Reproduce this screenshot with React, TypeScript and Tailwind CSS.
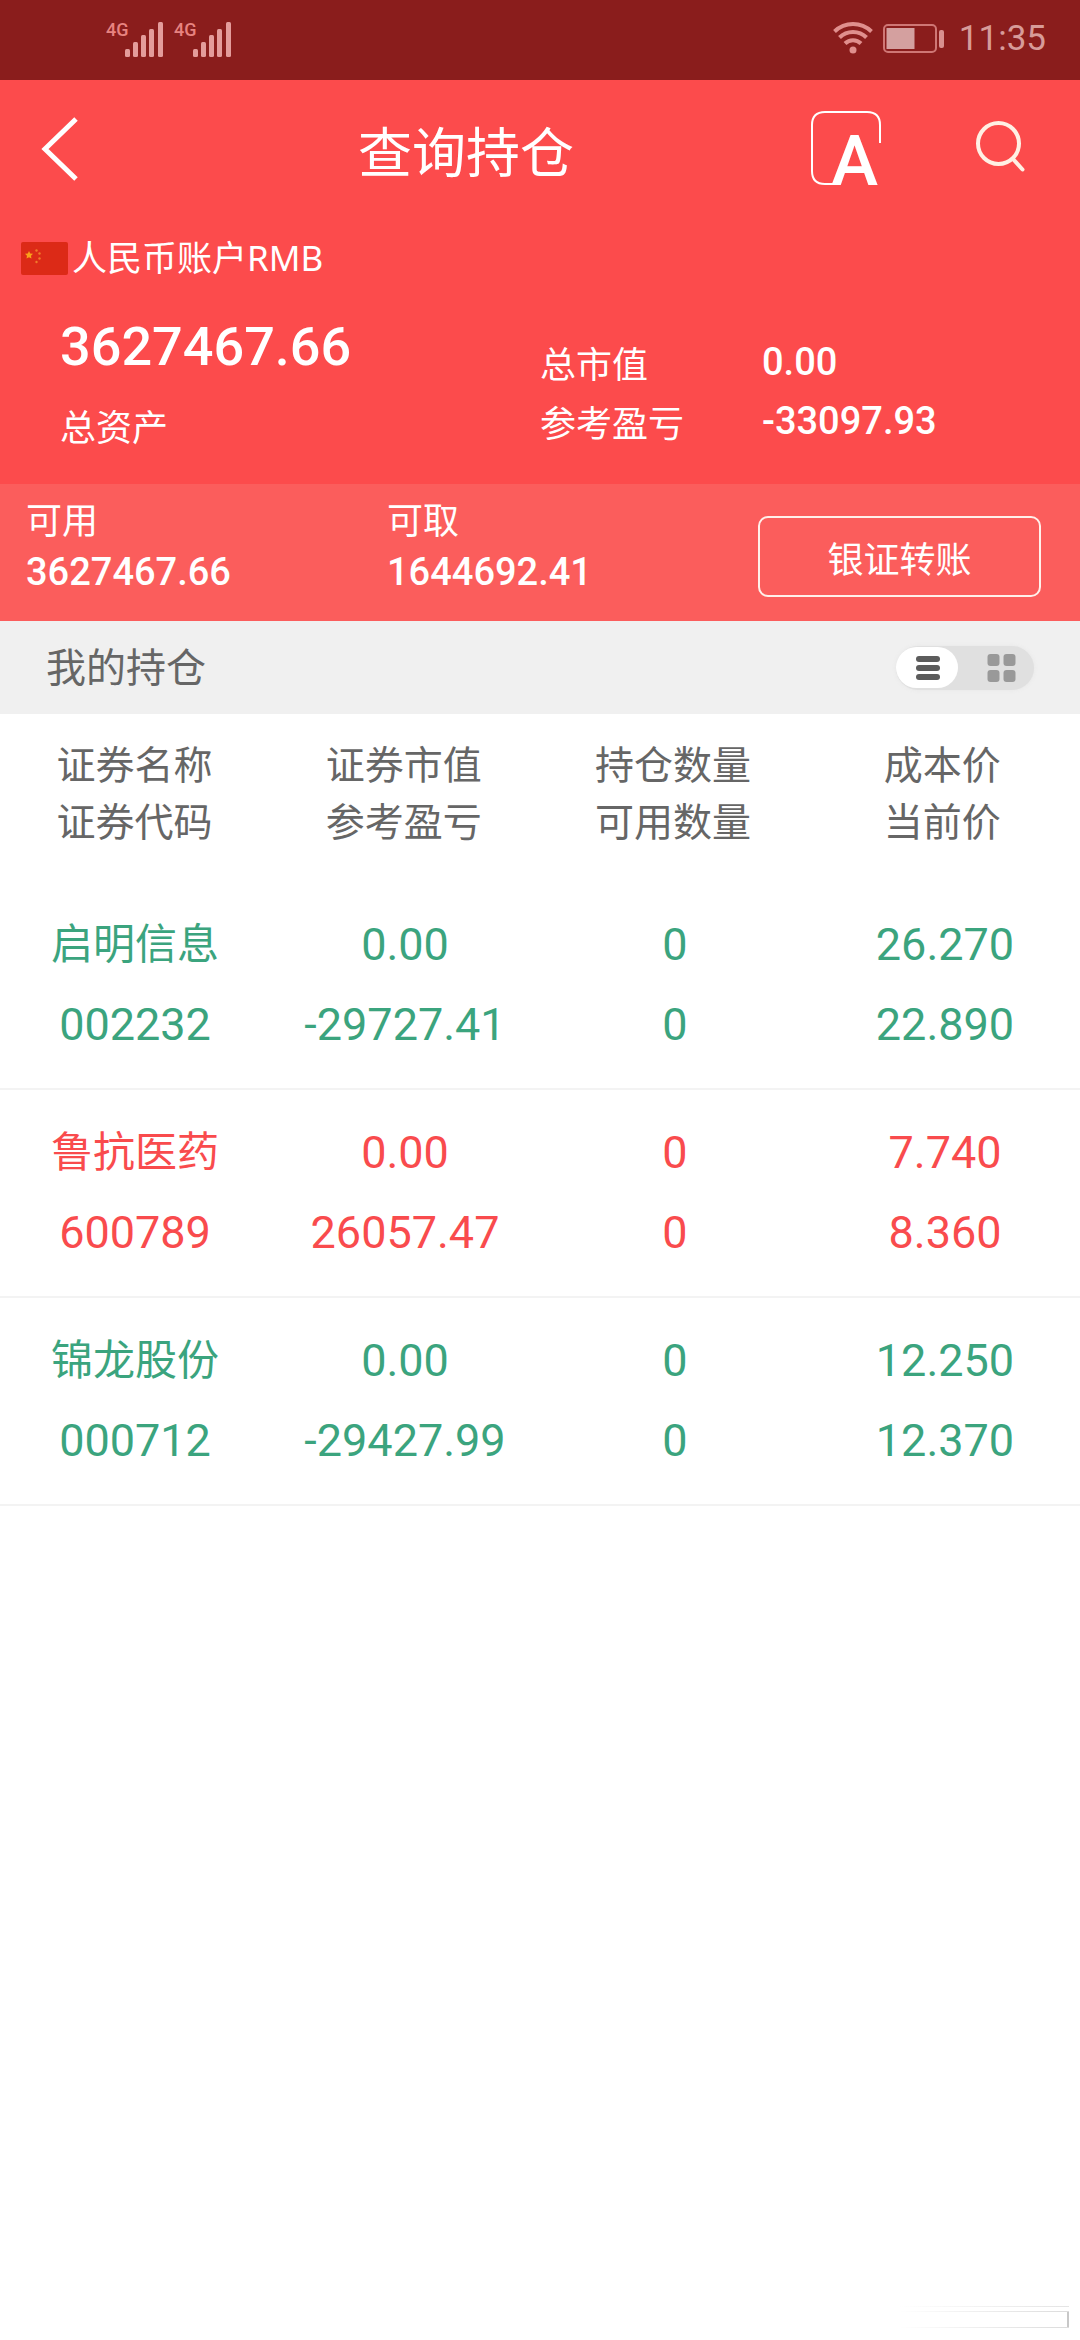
const holdings = [
  {
    name: '启明信息',
    code: '002232',
    marketValue: '0.00',
    profit: '-29727.41',
    quantity: '0',
    available: '0',
    cost: '26.270',
    price: '22.890',
    rising: false,
  },
  {
    name: '鲁抗医药',
    code: '600789',
    marketValue: '0.00',
    profit: '26057.47',
    quantity: '0',
    available: '0',
    cost: '7.740',
    price: '8.360',
    rising: true,
  },
  {
    name: '锦龙股份',
    code: '000712',
    marketValue: '0.00',
    profit: '-29427.99',
    quantity: '0',
    available: '0',
    cost: '12.250',
    price: '12.370',
    rising: false,
  },
];

const columns = [
  ['证券名称', '证券代码'],
  ['证券市值', '参考盈亏'],
  ['持仓数量', '可用数量'],
  ['成本价', '当前价'],
];

function Signal() {
  return (
    <div className="flex h-9 w-[68px]">
      <span className="w-[19px] shrink-0 font-['Roboto'] text-[18px] leading-[18px] font-medium text-[#e78380]">4G</span>
      <svg width="40" height="36" viewBox="0 0 40 36" fill="#e49c9b" className="shrink-0">
        <rect x="0" y="28" width="5" height="8" rx="1.5" />
        <rect x="8" y="21" width="5" height="15" rx="1.5" />
        <rect x="16" y="14" width="5" height="22" rx="1.5" />
        <rect x="24" y="8" width="5" height="28" rx="1.5" />
        <rect x="33" y="1" width="5" height="35" rx="1.5" />
      </svg>
    </div>
  );
}

function StatusBar() {
  return (
    <div className="flex h-20 items-start justify-between bg-[#8a1d1c] pr-[34px] pl-[106px]">
      <div className="flex pt-[21px]">
        <Signal />
        <Signal />
      </div>
      <div className="flex pt-[20px]">
        <svg width="40" height="36" viewBox="0 0 40 36" fill="none" stroke="#e08f8d" strokeWidth="4">
          <path d="M1.5 11.5C12 1.5 28 1.5 38.500 11.500" />
          <path d="M6.500 17.500C14 10 26 10 33.500 17.500" />
          <path d="M12 23.500C16.500 19 23.500 19 28 23.500" />
          <circle cx="20" cy="30" r="3.500" fill="#e08f8d" stroke="none" />
        </svg>
        <svg width="62" height="36" viewBox="0 0 62 36" className="ml-[10px]">
          <rect x="1" y="5" width="52" height="27" rx="4" fill="none" stroke="#cf7775" strokeWidth="2" />
          <rect x="3.500" y="8" width="28" height="21" fill="#d4a09f" />
          <rect x="56" y="10" width="5" height="18" rx="2" fill="#d9908f" />
        </svg>
        <span className="ml-[14px] font-['Roboto'] text-[35px] leading-[38px] text-[#d79b99]">11:35</span>
      </div>
    </div>
  );
}

function FontSizeIcon() {
  return (
    <svg width="72" height="76" viewBox="0 0 72 76">
      <path
        d="M70 33V15Q70 2 57 2H15Q2 2 2 15V61Q2 74 15 74H24"
        fill="none"
        stroke="#fff"
        strokeWidth="2"
      />
      <text x="21" y="75" fill="#fff" className="font-['Roboto'] text-[71px] font-medium">A</text>
    </svg>
  );
}

function TitleBar() {
  return (
    <header className="grid h-[144px] grid-cols-[358px_1fr_270px] items-start">
      <svg width="40" height="66" viewBox="0 0 40 66" fill="none" stroke="#fff" strokeWidth="5" className="mt-[36px] ml-[40px]">
        <path d="M36 3L5 33L36 63" />
      </svg>
      <h1 className="pt-[34px] text-[54px] leading-[72px]">查询持仓</h1>
      <div className="flex pt-[30px]">
        <FontSizeIcon />
        <svg width="52" height="54" viewBox="0 0 52 54" fill="none" stroke="#fff0e4" strokeWidth="4" strokeLinecap="round" className="mt-[10px] ml-[92px]">
          <circle cx="24.500" cy="23.500" r="20.500" />
          <path d="M39 39L48.500 49.500" />
        </svg>
      </div>
    </header>
  );
}

function Flag() {
  return (
    <svg width="47" height="33" viewBox="0 0 47 33">
      <rect width="47" height="33" rx="2" fill="#dc2a17" />
      <path d="M8 9l1.200 2.500 2.800.3-2 2 .5 2.800L8 15.300l-2.500 1.300.5-2.800-2-2 2.800-.3z" fill="#f9a11b" />
      <g fill="#f07a2a">
        <circle cx="15.500" cy="8.500" r="1.200" />
        <circle cx="18.500" cy="11.500" r="1.200" />
        <circle cx="18.500" cy="16.500" r="1.200" />
        <circle cx="15.500" cy="20" r="1.200" />
      </g>
    </svg>
  );
}

function Summary() {
  return (
    <section className="h-[260px]">
      <div className="flex items-center pt-[14px] pl-[21px]">
        <Flag />
        <span className="ml-[4px] font-['Noto_Sans','Noto_Sans_CJK_SC',sans-serif] text-[35px] leading-[40px]">人民币账户RMB</span>
      </div>
      <div className="grid grid-cols-[540px_222px_1fr]">
        <div className="pt-[37px] pl-[60px]">
          <div className="font-['Roboto'] text-[54px] leading-[64px] font-medium">3627467.66</div>
          <div className="mt-[24px] text-[36px] leading-[44px]">总资产</div>
        </div>
        <div className="pt-[55px] text-[36px] leading-[59px]">
          <div>总市值</div>
          <div>参考盈亏</div>
        </div>
        <div className="pt-[55px] font-['Roboto'] text-[38px] leading-[59px] font-medium">
          <div>0.00</div>
          <div>-33097.93</div>
        </div>
      </div>
    </section>
  );
}

function Balance({ label, value }: { label: string; value: string }) {
  return (
    <div className="pt-[12px]">
      <div className="text-[36px] leading-[44px]">{label}</div>
      <div className="mt-[9px] font-['Roboto'] text-[38px] leading-[46px] font-medium">{value}</div>
    </div>
  );
}

function BalanceBar() {
  return (
    <section className="grid h-[137px] grid-cols-[361px_371px_283px] bg-[#fb5d5c] pl-[26px]">
      <Balance label="可用" value="3627467.66" />
      <Balance label="可取" value="1644692.41" />
      <button className="mt-[32px] flex h-[81px] items-center justify-center rounded-[10px] border-2 border-[#fff0ea] text-[36px]">
        银证转账
      </button>
    </section>
  );
}

function ViewToggle() {
  return (
    <div className="flex h-[44px] w-[138px] items-center rounded-full bg-[#e0e0e0] shadow-[0_0_4px_#e6e6e6]">
      <div className="flex h-[41px] w-[62px] items-center justify-center rounded-full bg-white">
        <svg width="24" height="26" viewBox="0 0 24 26" fill="#5c5c5c" className="ml-[2px]">
          <rect y="1" width="24" height="6" rx="3" />
          <rect y="10" width="24" height="6" rx="3" />
          <rect y="19" width="24" height="6" rx="3" />
        </svg>
      </div>
      <svg width="30" height="30" viewBox="0 0 30 30" fill="#999" className="ml-[29px]">
        <rect x="0.500" y="1" width="12" height="12" rx="3" />
        <rect x="16.500" y="1" width="12" height="12" rx="3" />
        <rect x="0.500" y="17" width="12" height="12" rx="3" />
        <rect x="16.500" y="17" width="12" height="12" rx="3" />
      </svg>
    </div>
  );
}

function Cell({ top, bottom }: { top: string; bottom: string }) {
  return (
    <div className="text-center">
      <div>{top}</div>
      <div>{bottom}</div>
    </div>
  );
}

export default function App() {
  return (
    <div className="flex h-[2340px] w-[1080px] flex-col overflow-hidden bg-white font-['Noto_Sans_CJK_SC',sans-serif]">
      <StatusBar />
      <div className="bg-[#fc4b4c] text-white">
        <TitleBar />
        <Summary />
        <BalanceBar />
      </div>

      <div className="flex h-[93px] items-center justify-between bg-[#f0f0f0] pr-[46px] pl-[46px] text-[#666]">
        <h2 className="-mt-[6px] text-[40px] leading-[50px]">我的持仓</h2>
        <ViewToggle />
      </div>

      {/* Column titles */}
      <div className="grid h-[168px] grid-cols-4 pt-[20px] pr-[3px] text-[39px] leading-[57px] text-[#666]">
        {columns.map(([top, bottom]) => (
          <Cell key={top} top={top} bottom={bottom} />
        ))}
      </div>

      {holdings.map((item) => (
        <div
          key={item.code}
          className={`grid h-[208px] grid-cols-4 border-b-2 border-[#f3f3f3] pt-[23px] font-['Roboto','Noto_Sans_CJK_SC',sans-serif] text-[45px] leading-[80px] ${
            item.rising ? 'text-[#f94b4d]' : 'text-[#3ba47e]'
          }`}
        >
          <div className="text-center">
            <div className="text-[42px]">{item.name}</div>
            <div>{item.code}</div>
          </div>
          <Cell top={item.marketValue} bottom={item.profit} />
          <Cell top={item.quantity} bottom={item.available} />
          <Cell top={item.cost} bottom={item.price} />
        </div>
      ))}

      {/* Faint handle in the bottom corner */}
      <div className="mt-auto mr-[11px] mb-[12px] ml-auto w-[170px]">
        <div className="h-px bg-linear-to-r from-white to-[#e4e4e4]" />
        <div className="mt-[4px] h-px bg-linear-to-r from-white to-[#dcdcdc]" />
        <div className="ml-auto h-[15px] w-[2px] bg-[#c8c8c8]" />
        <div className="h-px bg-linear-to-r from-white to-[#dcdcdc]" />
      </div>
    </div>
  );
}
